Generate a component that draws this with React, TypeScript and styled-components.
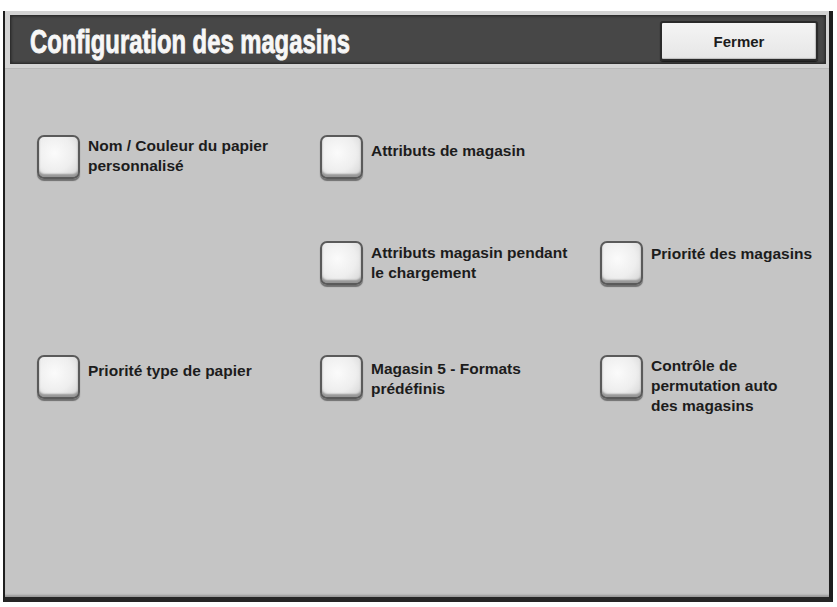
import React from "react";
import styled, { createGlobalStyle } from "styled-components";

/* global */

const GlobalStyle = createGlobalStyle`
  html, body {
    margin: 0;
    padding: 0;
    background: #ffffff;
  }
  body {
    font-family: "Liberation Sans", Arial, sans-serif;
  }
`;

/* styled-components */

const Frame = styled.div`
  box-sizing: border-box;
  margin: 11px 0 0 3px;
  width: 830px;
  height: 591px;
  background: #c5c5c5;
  border-left: 2px solid #1e1e1e;
  border-right: 4px solid #1e1e1e;
  border-bottom: 5px solid #262626;
  box-shadow: inset 0 -3px 2px -1px #9a9a9a;
  display: flex;
  flex-direction: column;
`;

const HeaderWrap = styled.div`
  background: #d3d3d3;
  padding: 4px 3px 4px 5px;
  border-bottom: 1px solid #b8b8b8;
`;

const Header = styled.div`
  box-sizing: border-box;
  height: 49px;
  background: #474747;
  border: 1px solid #2e2e2e;
  box-shadow: inset 0 0 3px #1f1f1f;
  display: flex;
  align-items: center;
  justify-content: space-between;
  padding: 5px 7px 2px 19px;
`;

const Title = styled.h1`
  margin: 0;
  font-family: "Liberation Sans", Arial, sans-serif;
  font-size: 34px;
  font-weight: bold;
  color: #f7f7f7;
  transform: scaleX(0.7);
  transform-origin: left center;
  white-space: nowrap;
  -webkit-text-stroke: 0.9px #f7f7f7;
`;

const CloseButton = styled.button`
  box-sizing: border-box;
  width: 158px;
  height: 40px;
  border: 2px solid #2a2a2a;
  border-radius: 3px;
  background: linear-gradient(#f4f4f4, #e6e6e6);
  box-shadow: inset -1px -1px 1px #bdbdbd, 0 1px 1px #1a1a1a;
  font-family: "Liberation Sans", Arial, sans-serif;
  font-size: 15px;
  font-weight: bold;
  color: #1c1c1c;
  cursor: pointer;
`;

const Body = styled.div`
  display: grid;
  grid-template-columns: 283px 280px 1fr;
  grid-template-rows: 106px 114px auto;
  padding: 66px 0 0 32px;
`;

const Cell = styled.div<{ $col: number; $row: number }>`
  grid-column: ${(p) => p.$col};
  grid-row: ${(p) => p.$row};
  display: flex;
  align-items: flex-start;
  gap: 8px;
`;

const Check = styled.button`
  flex: none;
  box-sizing: border-box;
  width: 43px;
  height: 44px;
  border: 2px solid #5a5a5a;
  border-radius: 7px;
  background: radial-gradient(circle at 40% 40%, #fbfbfb 0%, #eeeeee 55%, #d2d2d2 100%);
  box-shadow: inset 0 -3px 2px #969696, 0 2px 1px #6e6e6e;
  cursor: pointer;
`;

const Label = styled.div<{ $top: number }>`
  padding-top: ${(p) => p.$top}px;
  font-family: "Liberation Sans", Arial, sans-serif;
  font-size: 15.5px;
  font-weight: bold;
  line-height: 20px;
  color: #1c1c1c;
`;

/* ------------------------- data ------------------------- */

const items = [
  { col: 1, row: 1, top: 1, lines: ["Nom / Couleur du papier", "personnalisé"] },
  { col: 2, row: 1, top: 6, lines: ["Attributs de magasin"] },
  { col: 2, row: 2, top: 2, lines: ["Attributs magasin pendant", "le chargement"] },
  { col: 3, row: 2, top: 3, lines: ["Priorité des magasins"] },
  { col: 1, row: 3, top: 6, lines: ["Priorité type de papier"] },
  { col: 2, row: 3, top: 4, lines: ["Magasin 5 - Formats", "prédéfinis"] },
  { col: 3, row: 3, top: 1, lines: ["Contrôle de", "permutation auto", "des magasins"] },
];

const App: React.FC = () => {
  return (
    <>
      <GlobalStyle />
      <Frame>
        <HeaderWrap>
          <Header>
            <Title>Configuration des magasins</Title>
            <CloseButton>Fermer</CloseButton>
          </Header>
        </HeaderWrap>

        <Body>
          {items.map((it) => (
            <Cell key={it.lines[0]} $col={it.col} $row={it.row}>
              <Check aria-label={it.lines.join(" ")} />
              <Label $top={it.top}>
                {it.lines.map((l, i) => (
                  <React.Fragment key={l}>
                    {i > 0 && <br />}
                    {l}
                  </React.Fragment>
                ))}
              </Label>
            </Cell>
          ))}
        </Body>
      </Frame>
    </>
  );
};

export default App;
